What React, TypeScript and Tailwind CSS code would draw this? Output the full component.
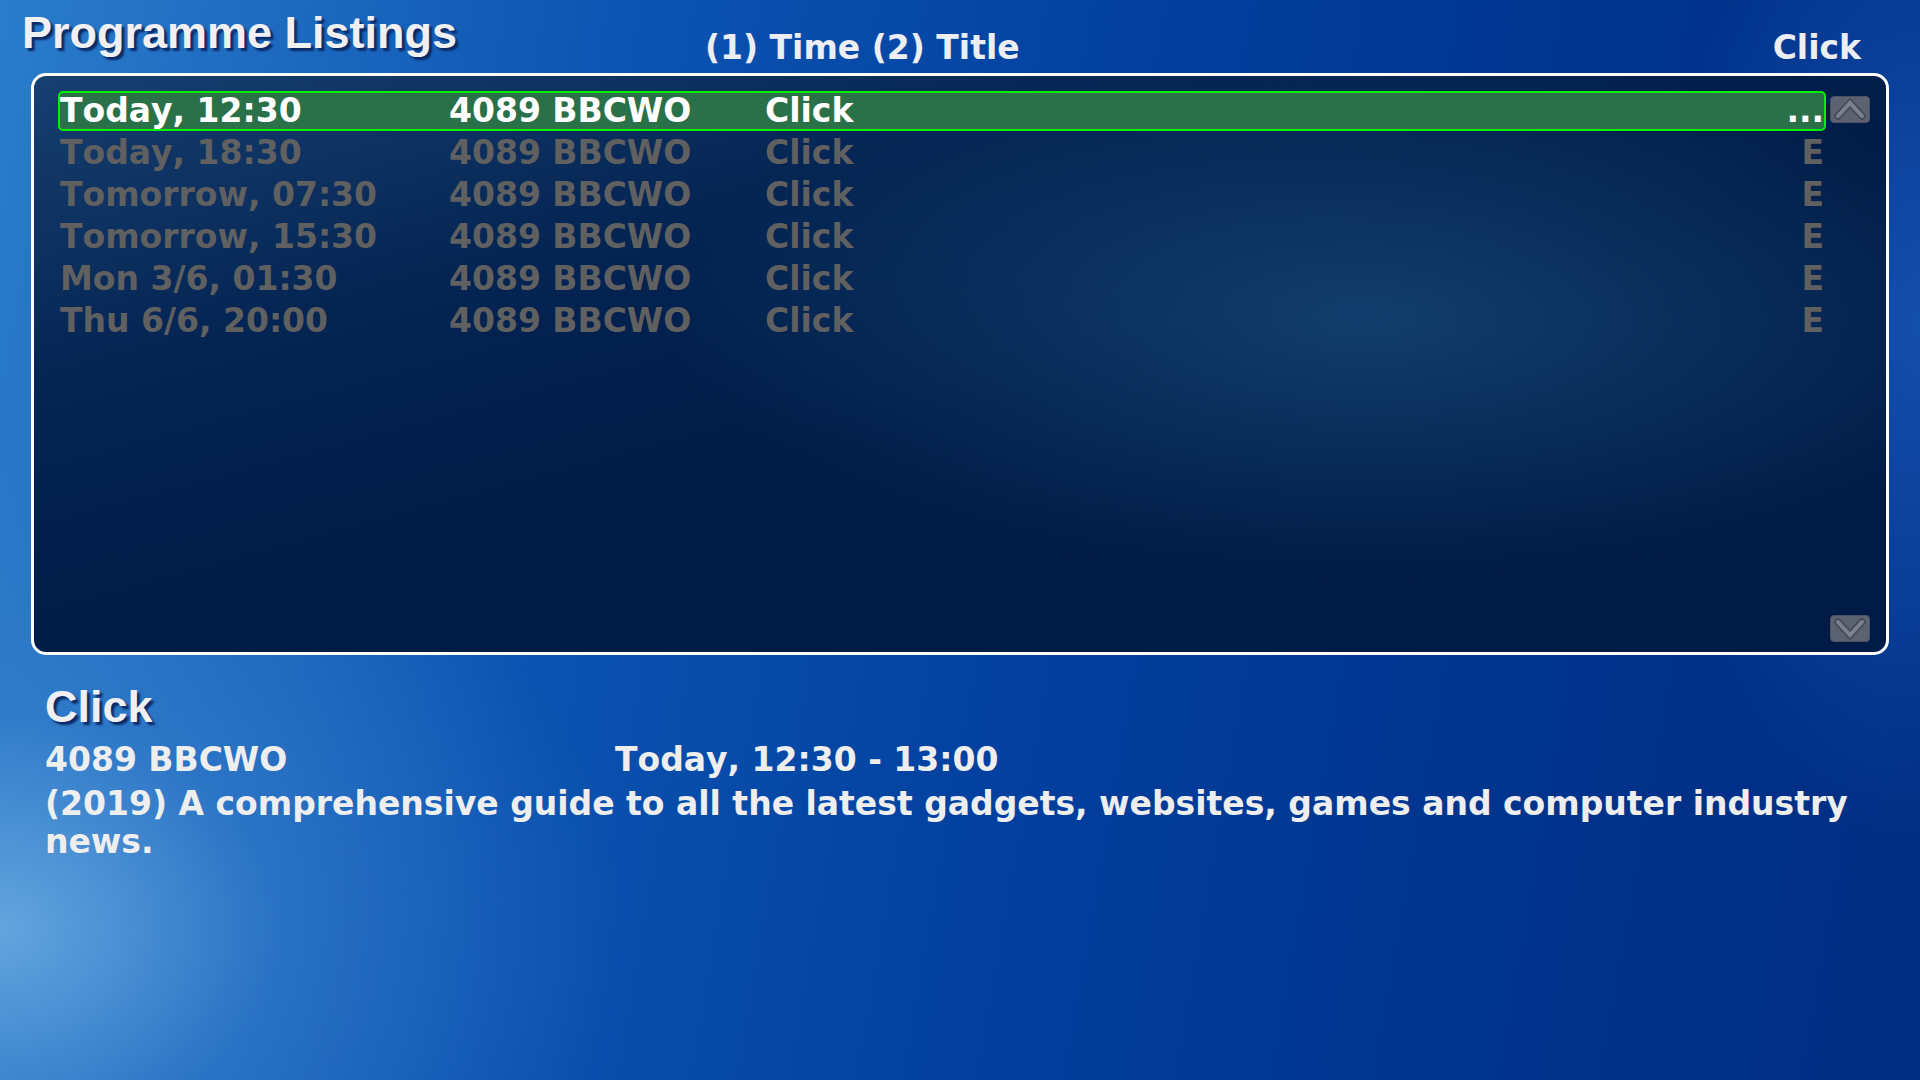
import React from "react";

const rows = [
  { t: "Today, 12:30", ch: "4089 BBCWO", title: "Click", end: "...", sel: true },
  { t: "Today, 18:30", ch: "4089 BBCWO", title: "Click", end: "E", sel: false },
  { t: "Tomorrow, 07:30", ch: "4089 BBCWO", title: "Click", end: "E", sel: false },
  { t: "Tomorrow, 15:30", ch: "4089 BBCWO", title: "Click", end: "E", sel: false },
  { t: "Mon 3/6, 01:30", ch: "4089 BBCWO", title: "Click", end: "E", sel: false },
  { t: "Thu 6/6, 20:00", ch: "4089 BBCWO", title: "Click", end: "E", sel: false },
];

function ScrollButton({ up }: { up: boolean }) {
  const pts = up ? "8,19.5 20,6.5 32,19.5" : "8,6.5 20,19.5 32,6.5";
  return (
    <div className="w-[40px] h-[27px] rounded-[4px] bg-[#5b6271] border border-[#4c5262] flex items-center justify-center">
      <svg width="38" height="25" viewBox="1 0.5 38 25">
        <polyline points={pts} fill="none" stroke="#454b58" strokeWidth="7.5" strokeLinejoin="miter" strokeLinecap="round" />
        <polyline points={pts} fill="none" stroke="#7a8190" strokeWidth="4" strokeLinejoin="miter" strokeLinecap="round" />
      </svg>
    </div>
  );
}

export default function App() {
  return (
    <div className="relative w-[1920px] h-[1080px] overflow-hidden font-['DejaVu_Sans',sans-serif] font-bold [font-kerning:none] [background:radial-gradient(ellipse_620px_480px_at_0%_86%,rgba(105,170,225,0.9)_0%,rgba(60,130,205,0.5)_45%,transparent_100%),radial-gradient(ellipse_260px_520px_at_100%_30%,rgba(40,110,210,0.5)_0%,transparent_100%),linear-gradient(100deg,#2b7ccb_0%,#0c54b2_30%,#023f9e_55%,#00338c_80%,#002d82_100%)]">
      {/* Header */}
      <div className="flex h-[73px] text-[#eceef3]">
        <div className="w-[705px] shrink-0 pl-[22px] pt-[10px]">
          <div className="font-['Liberation_Sans',Arial,sans-serif] text-[45px] leading-none text-[#f0f0f2] [text-shadow:3px_3px_2px_#0b2a66]">
            Programme Listings
          </div>
        </div>
        <div className="pt-[31px] text-[33px] leading-none">(1) Time (2) Title</div>
        <div className="ml-auto pr-[59px] pt-[31px] text-[33px] leading-none">Click</div>
      </div>

      {/* Listing panel */}
      <div className="mx-[31px] h-[582px] rounded-[15px] border-[3px] border-white flex [background:radial-gradient(ellipse_700px_260px_at_72%_42%,rgba(30,85,135,0.6)_0%,transparent_100%),linear-gradient(165deg,#173f70_0%,#042452_30%,#001b46_55%,#001b45_100%)]">
        <div className="flex-1 pl-[24px] pt-[14px] flex flex-col">
          {rows.map((r, i) => (
            <div key={i} className="h-[42px] py-[1px]">
              <div
                className={
                  r.sel
                    ? "h-[40px] flex border-2 border-[#00f000] rounded-[5px] bg-[#2a7048] text-white text-[33px] leading-[36px]"
                    : "h-[40px] flex border-2 border-transparent text-[#606060] text-[33px] leading-[36px]"
                }
              >
                <div className="w-[389px] whitespace-nowrap">{r.t}</div>
                <div className="w-[316px] whitespace-nowrap">{r.ch}</div>
                <div className="flex-1 whitespace-nowrap">{r.title}</div>
                <div className="whitespace-nowrap">{r.end}</div>
              </div>
            </div>
          ))}
        </div>
        <div className="w-[40px] ml-[4px] mr-[16px] pt-[20px] pb-[10px] flex flex-col justify-between">
          <ScrollButton up={true} />
          <ScrollButton up={false} />
        </div>
      </div>

      {/* Details */}
      <div className="pl-[45px] pt-[29px] text-[#eeeeef]">
        <div className="font-['Liberation_Sans',Arial,sans-serif] text-[45px] leading-none text-[#f0f0f2] [text-shadow:3px_3px_2px_#0b2a66]">
          Click
        </div>
        <div className="mt-[12px] flex text-[33px] leading-[38px]">
          <div className="w-[570px] whitespace-nowrap">4089 BBCWO</div>
          <div className="whitespace-nowrap">Today, 12:30 - 13:00</div>
        </div>
        <div className="mt-[6px] w-[1840px] text-[33px] leading-[38px]">
          (2019) A comprehensive guide to all the latest gadgets, websites, games and computer industry news.
        </div>
      </div>
    </div>
  );
}
